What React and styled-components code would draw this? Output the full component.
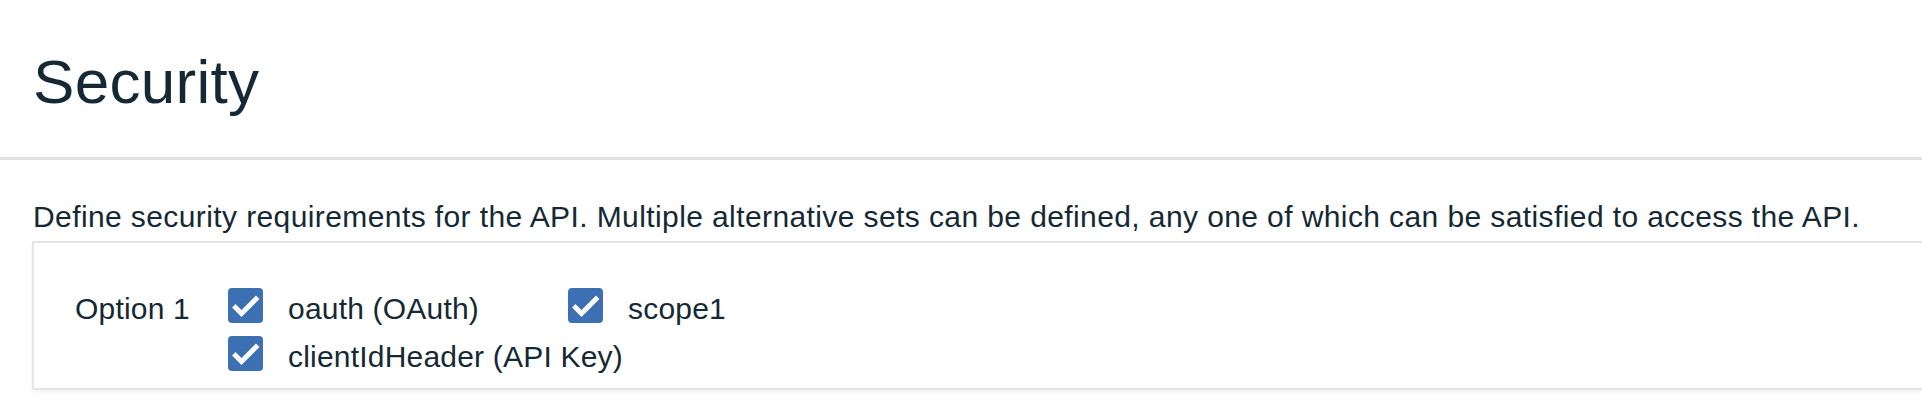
import styled, { createGlobalStyle } from 'styled-components'

const GlobalStyle = createGlobalStyle`
  html, body {
    margin: 0;
    padding: 0;
    background: #ffffff;
  }
  body {
    font-family: "Liberation Sans", Arial, sans-serif;
    color: #152935;
    overflow-x: hidden;
  }
`

const Page = styled.div`
  width: 100%;
  overflow: hidden;
  padding-bottom: 12px;
`

const Header = styled.header`
  padding: 46px 0 40px 33px;
  border-bottom: 3px solid #dfe3e6;
`

const Title = styled.h1`
  margin: 0;
  font-size: 62px;
  line-height: 71px;
  font-weight: 400;
  letter-spacing: 0.3px;
  color: #152935;
`

const Content = styled.section`
  padding: 40px 0 0 32px;
`

const Description = styled.p`
  margin: 0 0 7px 1px;
  font-size: 30px;
  line-height: 34px;
  letter-spacing: 0.4px;
  color: #152935;
`

const OptionsBox = styled.div`
  margin-right: -60px;
  border: 2px solid #e5e5e5;
  box-shadow: 0 2px 4px rgba(0, 0, 0, 0.05);
  padding: 45px 0 14px 41px;
`

const OptionRow = styled.div`
  display: flex;
  align-items: flex-start;
`

const OptionLabel = styled.div`
  width: 153px;
  flex: none;
  font-size: 30px;
  line-height: 35px;
  letter-spacing: 0.2px;
  padding-top: 3px;
`

const SchemeList = styled.div`
  display: flex;
  flex-direction: column;
  gap: 10px;
`

const SchemeRow = styled.div`
  display: flex;
  align-items: flex-start;
`

const CheckItem = styled.label`
  display: flex;
  align-items: flex-start;
  gap: 25px;
  margin-left: ${(p) => p.$offset || 0}px;
  font-size: 30px;
  line-height: 35px;
  letter-spacing: 0.2px;
  color: #152935;
`

const CheckText = styled.span`
  padding-top: 3px;
`

const Box = styled.span`
  width: 35px;
  height: 35px;
  flex: none;
  border-radius: 4px;
  background: #3d70b2;
  display: flex;
  align-items: center;
  justify-content: center;
`

const Check = ({ children, offset }) => (
  <CheckItem $offset={offset}>
    <Box>
      <svg width="35" height="35" viewBox="0 0 35 35">
        <polyline
          points="7.5,19.5 13.5,25.5 28,11"
          fill="none"
          stroke="#ffffff"
          strokeWidth="4.8"
          strokeLinecap="square"
        />
      </svg>
    </Box>
    <CheckText>{children}</CheckText>
  </CheckItem>
)

export default function App() {
  return (
    <Page>
      <GlobalStyle />
      <Header>
        <Title>Security</Title>
      </Header>
      <Content>
        <Description>
          Define security requirements for the API. Multiple alternative sets can be defined, any one of which can be satisfied to access the API.
        </Description>
        <OptionsBox>
          <OptionRow>
            <OptionLabel>Option 1</OptionLabel>
            <SchemeList>
              <SchemeRow>
                <Check>oauth (OAuth)</Check>
                <Check offset={89}>scope1</Check>
              </SchemeRow>
              <SchemeRow>
                <Check>clientIdHeader (API Key)</Check>
              </SchemeRow>
            </SchemeList>
          </OptionRow>
        </OptionsBox>
      </Content>
    </Page>
  )
}
